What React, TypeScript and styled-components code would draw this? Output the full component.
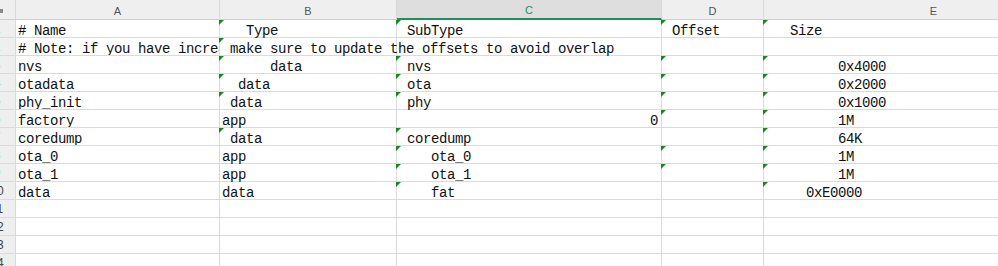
import React from "react";
import styled, { createGlobalStyle, css } from "styled-components";

const Global = createGlobalStyle`
  html, body { margin: 0; padding: 0; background: #ffffff; overflow: hidden; }
  #root { width: 998px; height: 266px; overflow: hidden; }
`;

const GRID = "#dadada";
const HEAD_BG = "#efefef";
const SEL_HEAD_BG = "#dedede";
const GREEN = "#1d8f5a";

const Sheet = styled.div`
  display: grid;
  grid-template-columns: 16px 204px 177px 265px 102px 340px;
  grid-auto-rows: 18px;
  grid-template-rows: 20px;
  width: 1104px;
  background: #ffffff;
`;

const Corner = styled.div`
  background: ${HEAD_BG};
  border-right: 1px solid ${GRID};
  border-bottom: 1px solid #cfcfcf;
  box-sizing: border-box;
  display: flex;
  align-items: center;
`;

const CornerMark = styled.span`
  width: 3px;
  height: 4px;
  margin-top: 2px;
  background: #8a8a8a;
`;

const ColHead = styled.div<{ $sel?: boolean }>`
  box-sizing: border-box;
  background: ${(p) => (p.$sel ? SEL_HEAD_BG : HEAD_BG)};
  border-right: 1px solid ${GRID};
  border-bottom: ${(p) => (p.$sel ? `2px solid ${GREEN}` : "1px solid #cfcfcf")};
  display: flex;
  align-items: center;
  justify-content: center;
  padding-top: 2px;
  font-family: "Liberation Sans", Arial, sans-serif;
  font-size: 11px;
  color: ${(p) => (p.$sel ? GREEN : "#555555")};
`;

const RowHead = styled.div`
  box-sizing: border-box;
  background: ${HEAD_BG};
  border-right: 1px solid ${GRID};
  border-bottom: 1px solid ${GRID};
  display: flex;
  justify-content: flex-end;
  align-items: center;
  overflow: hidden;
`;

const RowNum = styled.span<{ $sel?: boolean }>`
  flex: 0 0 36px;
  text-align: center;
  font-family: "Liberation Sans", Arial, sans-serif;
  font-size: 12px;
  color: ${(p) => (p.$sel ? "#3f74d6" : "#444444")};
`;

const Cell = styled.div<{ $flag?: boolean; $clip?: boolean; $right?: boolean; $over?: boolean }>`
  position: relative;
  box-sizing: border-box;
  border-right: 1px solid ${GRID};
  border-bottom: 1px solid ${GRID};
  padding: 3px 3px 0 2px;
  font-family: "Liberation Mono", "Courier New", monospace;
  font-size: 14px;
  letter-spacing: -0.4px;
  line-height: 16px;
  color: #111111;
  white-space: pre;
  text-align: ${(p) => (p.$right ? "right" : "left")};
  overflow: ${(p) => (p.$clip ? "hidden" : "visible")};
  ${(p) => p.$over && css`z-index: 1;`}
  ${(p) =>
    p.$flag &&
    css`
      &::before {
        content: "";
        position: absolute;
        left: -1px;
        top: 0;
        width: 0;
        height: 0;
        border-top: 5px solid #138a1c;
        border-right: 5px solid transparent;
      }
    `}
`;

type CellData = { text: string; flag?: boolean; right?: boolean };

const c = (text: string, flag = false, right = false): CellData => ({ text, flag, right });

const rows: CellData[][] = [
  [c("# Name"), c("   Type", true), c(" SubType", true), c(" Offset", true), c("   Size", true)],
  [
    c("# Note: if you have increased the bootloader size"),
    c(" make sure to update the offsets to avoid overlap", true),
    c(""),
    c(""),
    c(""),
  ],
  [c("nvs"), c("      data", true), c(" nvs", true), c("", true), c("         0x4000", true)],
  [c("otadata"), c("  data", true), c(" ota", true), c("", true), c("         0x2000", true)],
  [c("phy_init"), c(" data", true), c(" phy", true), c("", true), c("         0x1000", true)],
  [c("factory"), c("app"), c("0", false, true), c("", true), c("         1M", true)],
  [c("coredump"), c(" data", true), c(" coredump", true), c(""), c("         64K", true)],
  [c("ota_0"), c("app"), c("    ota_0", true), c("", true), c("         1M", true)],
  [c("ota_1"), c("app"), c("    ota_1", true), c("", true), c("         1M", true)],
  [c("data"), c("data"), c("    fat", true), c(""), c("     0xE0000", true)],
];

const TOTAL_ROWS = 14;
const cols = ["A", "B", "C", "D", "E"];

export default function App() {
  const all: CellData[][] = [];
  for (let i = 0; i < TOTAL_ROWS; i++) {
    all.push(rows[i] ?? cols.map(() => c("")));
  }
  return (
    <>
      <Global />
      <Sheet>
        <Corner>
          <CornerMark />
        </Corner>
        {cols.map((col) => (
          <ColHead key={col} $sel={col === "C"}>
            {col}
          </ColHead>
        ))}
        {all.map((row, ri) => (
          <React.Fragment key={ri}>
            <RowHead>
              <RowNum $sel={ri < 9}>{ri + 1}</RowNum>
            </RowHead>
            {row.map((cell, ci) => (
              <Cell
                key={ci}
                $flag={cell.flag}
                $right={cell.right}
                $clip={ci === 0}
                $over={ri === 1 && ci === 1}
              >
                {cell.text}
              </Cell>
            ))}
          </React.Fragment>
        ))}
      </Sheet>
    </>
  );
}
